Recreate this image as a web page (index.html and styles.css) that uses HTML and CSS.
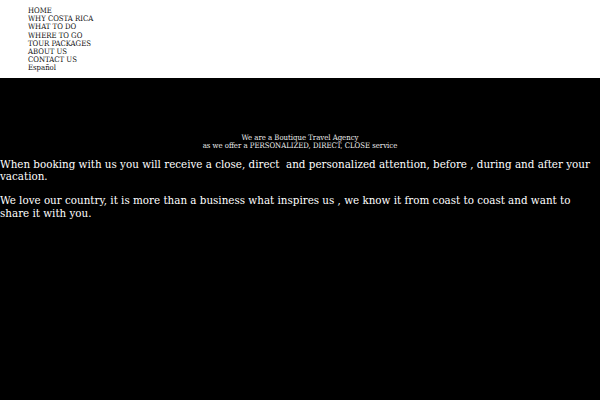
FILE: index.html
```html
<!DOCTYPE html>
<html>
<head>
<meta charset="utf-8">
<link rel="stylesheet" href="styles.css">
</head>
<body>
<header class="top">
  <ul class="menu">
    <li>HOME</li>
    <li>WHY COSTA RICA</li>
    <li>WHAT TO DO</li>
    <li>WHERE TO GO</li>
    <li>TOUR PACKAGES</li>
    <li>ABOUT US</li>
    <li>CONTACT US</li>
    <li>Español</li>
  </ul>
</header>
<main class="dark">
  <div class="intro">
    <p>We are a Boutique Travel Agency<br>as we offer a PERSONALIZED, DIRECT, CLOSE service</p>
  </div>
  <div class="body-text">
    <p>When booking with us you will receive a close, direct&nbsp; and personalized attention, before , during and after your vacation.</p>
    <p>We love our country, it is more than a business what inspires us , we know it from coast to coast and want to share it with you.</p>
  </div>
</main>
</body>
</html>
```
FILE: styles.css
```css
html, body {
  margin: 0;
  padding: 0;
}
body {
  font-family: "DejaVu Serif Condensed", "DejaVu Serif", serif;
  font-stretch: condensed;
  background: #000;
  height: 400px;
  overflow: hidden;
}
.top {
  background: #fff;
  height: 78px;
  padding-top: 7px;
  box-sizing: border-box;
}
.menu {
  list-style: none;
  margin: 0;
  padding: 0 0 0 28px;
  font-size: 7.7px;
  line-height: 8.2px;
  color: #111;
}
.dark {
  background: #000;
  color: #fff;
  padding-top: 56px;
}
.intro {
  text-align: center;
  font-size: 7.7px;
  line-height: 8.3px;
  color: #eee;
}
.intro p {
  margin: 0;
}
.body-text {
  font-size: 11.5px;
  line-height: 12.8px;
  padding-top: 7px;
}
.body-text p {
  margin: 0 0 11px 0;
}
```
